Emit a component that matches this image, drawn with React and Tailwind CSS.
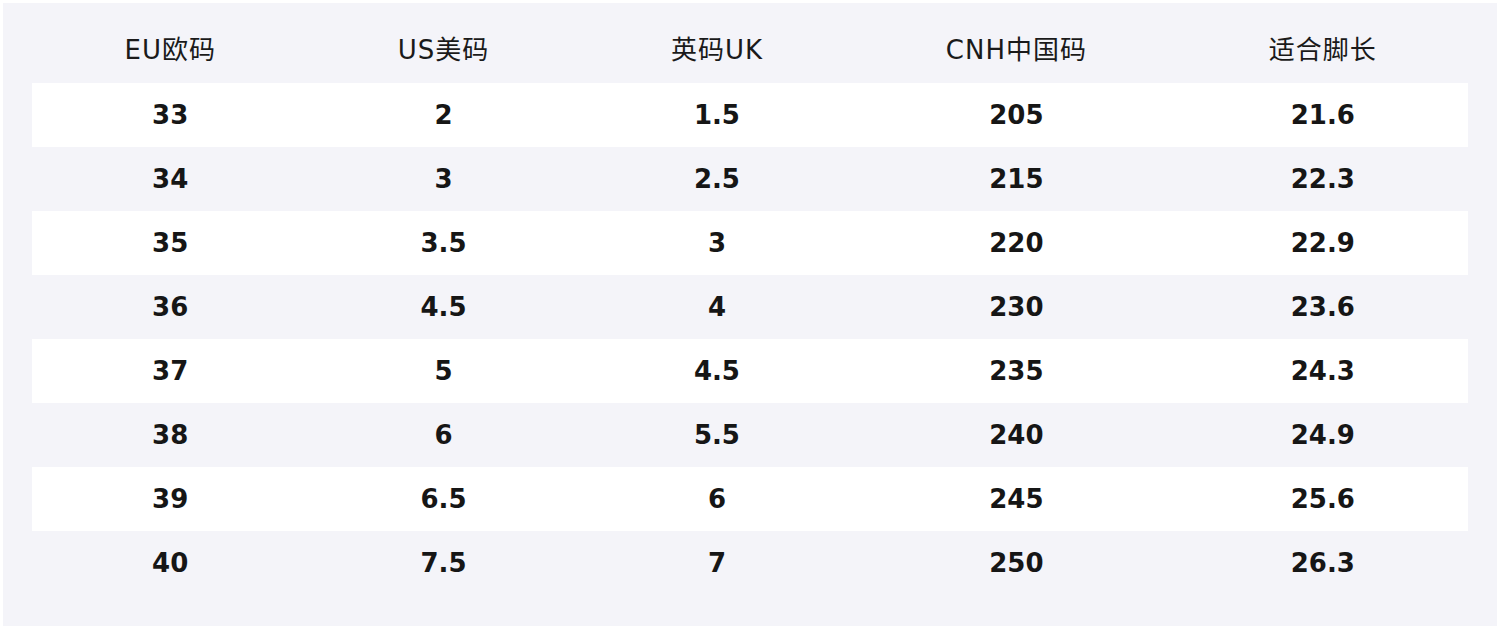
const headers = ["EU欧码", "US美码", "英码UK", "CNH中国码", "适合脚长"];

const sizes = [
  ["33", "2", "1.5", "205", "21.6"],
  ["34", "3", "2.5", "215", "22.3"],
  ["35", "3.5", "3", "220", "22.9"],
  ["36", "4.5", "4", "230", "23.6"],
  ["37", "5", "4.5", "235", "24.3"],
  ["38", "6", "5.5", "240", "24.9"],
  ["39", "6.5", "6", "245", "25.6"],
  ["40", "7.5", "7", "250", "26.3"],
];

const App = () => {
  return (
    <div
      className="min-h-screen bg-white p-[3px]"
      style={{ fontFamily: '"DejaVu Sans", "Noto Sans CJK SC", sans-serif' }}
    >
      <div className="bg-[#f4f4f9] px-[29px] pt-[15px] pb-[31px]">
        {/* Header */}
        <div className="grid grid-cols-[276fr_270fr_276fr_322fr_290fr] h-[65px] items-center text-[26px] tracking-[1px] text-[#1a1a1a]">
          {headers.map((h) => (
            <div key={h} className="text-center">
              {h}
            </div>
          ))}
        </div>

        {/* Rows */}
        {sizes.map((row, i) => (
          <div
            key={row[0]}
            className={`grid grid-cols-[276fr_270fr_276fr_322fr_290fr] h-[64px] items-center text-[26px] font-bold text-[#161616] ${
              i % 2 === 0 ? "bg-white" : ""
            }`}
          >
            {row.map((cell, j) => (
              <div key={j} className="text-center">
                {cell}
              </div>
            ))}
          </div>
        ))}
      </div>
    </div>
  );
};

export default App;
